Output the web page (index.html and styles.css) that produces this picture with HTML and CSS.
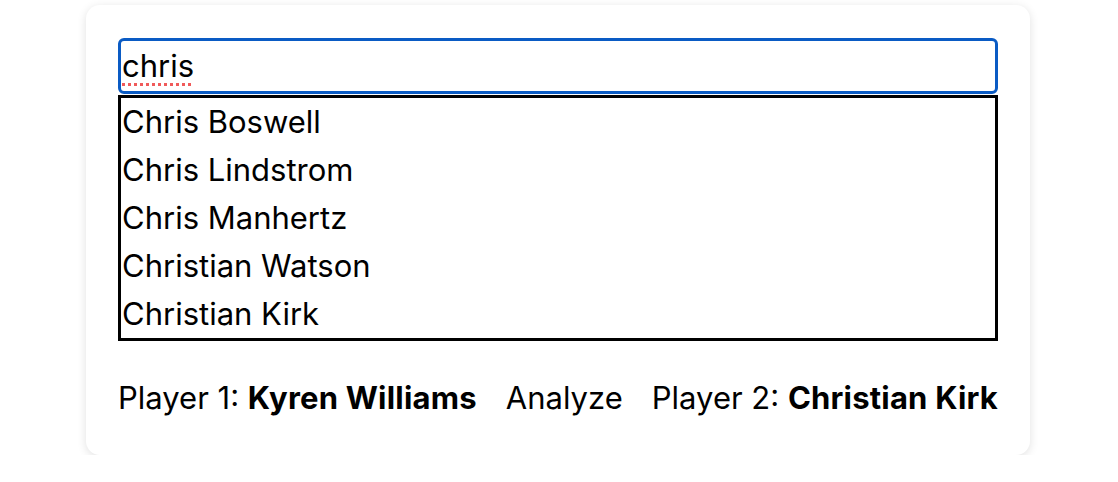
FILE: index.html
```html
<!DOCTYPE html>
<html lang="en">
<head>
    <meta charset="UTF-8">
    <meta name="viewport" content="width=device-width, initial-scale=1.0">
    <title>Player Compare</title>
    <link rel="stylesheet" href="styles.css">
</head>
<body>
    <div class="card">
        <div class="search-box"><span class="misspelled">chris</span></div>
        <ul class="suggestions">
            <li>Chris Boswell</li>
            <li>Chris Lindstrom</li>
            <li>Chris Manhertz</li>
            <li>Christian Watson</li>
            <li>Christian Kirk</li>
        </ul>
        <div class="players">
            <span>Player 1: <b>Kyren Williams</b></span>
            <span class="analyze">Analyze</span>
            <span>Player 2: <b>Christian Kirk</b></span>
        </div>
    </div>
</body>
</html>
```

FILE: styles.css
```css
body {
    margin: 0;
    padding: 5px 2px 0 0;
    background-color: #fff;
    color: #000;
    font-family: Inter, "Noto Sans", sans-serif;
    font-size: 31px;
}
.card {
    width: 880px;
    margin: 0 auto;
    padding: 33px 32px 33px;
    background-color: #fff;
    border-radius: 14px;
    box-shadow: 0 2px 10px rgba(0,0,0,0.12);
}
.search-box {
    box-sizing: border-box;
    height: 56px;
    border: 3px solid #0a5bc4;
    border-radius: 6px;
    padding: 0 1px;
    line-height: 50px;
}
.misspelled {
    text-decoration: underline dotted #f05a5a;
    text-decoration-thickness: 3px;
    text-underline-offset: 6px;
}
.suggestions {
    list-style: none;
    margin: 1px 0 0;
    padding: 0 1px;
    border: 3px solid #000;
}
.suggestions li {
    line-height: 48px;
}
.players {
    display: flex;
    justify-content: space-between;
    margin-top: 33px;
    line-height: 48px;
}
.players b {
    font-weight: 700;
    letter-spacing: 0.2px;
}
```
